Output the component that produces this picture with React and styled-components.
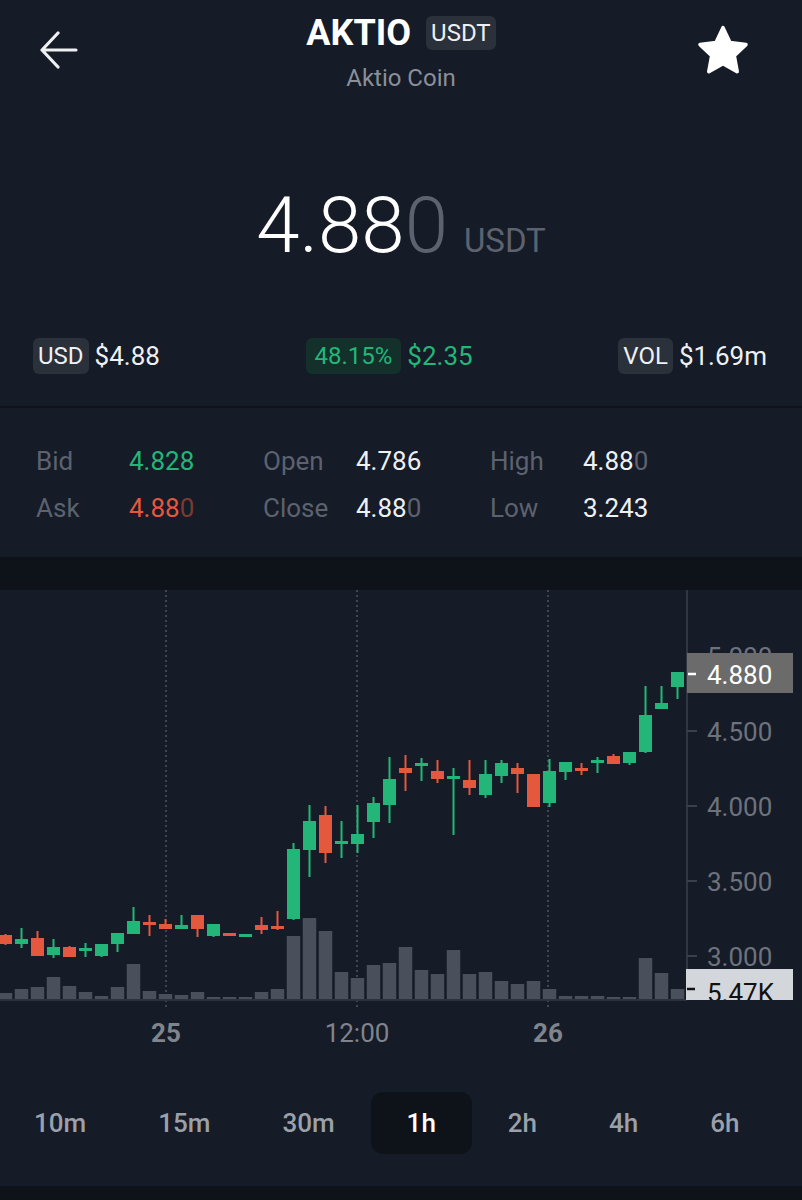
import React from "react";
import styled, { createGlobalStyle, css } from "styled-components";

const C = {
  bg: "#151b27",
  deep: "#0e1319",
  white: "#eef0f2",
  grey: "#5c626e",
  sub: "#8a8f98",
  green: "#22b779",
  red: "#e4583e",
  dimRed: "#7d3a30",
  badge: "#2b313b",
  greenBadge: "#13302b",
  vol: "#4a505b",
  axisText: "#6d727c",
};

const Global = createGlobalStyle`
  html, body { margin: 0; padding: 0; background: ${C.bg}; }
  body { font-family: Roboto, "Liberation Sans", sans-serif; color: ${C.white}; }
  * { box-sizing: border-box; }
`;

const Page = styled.div`
  width: 802px;
  background: ${C.bg};
`;

const Header = styled.header`
  display: grid;
  grid-template-columns: 1fr auto 1fr;
  align-items: center;
  height: 100px;
  padding: 0 40px;
`;

const IconButton = styled.button`
  background: none;
  border: 0;
  padding: 0 ${(p) => (p.$end ? 12 : 0)}px 0 0;
  display: flex;
  color: ${C.white};
  justify-self: ${(p) => (p.$end ? "end" : "start")};
`;

const TitleCol = styled.div`
  align-self: start;
  padding-top: 15px;
  display: flex;
  flex-direction: column;
  align-items: center;
`;

const TitleRow = styled.div`
  display: flex;
  align-items: center;
  gap: 15px;
  height: 36px;
`;

const Title = styled.h1`
  margin: 0;
  font-size: 36px;
  font-weight: 700;
  line-height: 36px;
  color: #fff;
`;

const Badge = styled.span`
  display: inline-flex;
  align-items: center;
  height: ${(p) => p.$h || 36}px;
  padding: 0 ${(p) => p.$pad || 5}px;
  border-radius: 6px;
  background: ${(p) => (p.$tone === "up" ? C.greenBadge : C.badge)};
  color: ${(p) => (p.$tone === "up" ? C.green : C.white)};
  font-size: ${(p) => p.$size || 26}px;
`;

const Subtitle = styled.div`
  margin-top: 12px;
  font-size: 24px;
  line-height: 30px;
  color: ${C.sub};
`;

const PriceSection = styled.section`
  display: flex;
  justify-content: center;
  align-items: baseline;
  padding-top: 81px;
  height: 171px;
`;

const BigPrice = styled.span`
  font-size: 78px;
  font-weight: 300;
  line-height: 90px;
  color: #fff;
`;

const Faded = styled.span`
  color: ${(p) => (p.$tone === "down" ? C.dimRed : C.grey)};
`;

const BigUnit = styled.span`
  margin-left: 16px;
  font-size: 33px;
  font-weight: 400;
  color: ${C.grey};
`;

const SummaryRow = styled.section`
  display: flex;
  justify-content: space-between;
  align-items: center;
  margin-top: 67px;
  padding: 0 35px 0 33px;
  height: 36px;
`;

const SummaryItem = styled.div`
  display: flex;
  align-items: center;
  gap: 6px;
  font-size: 26px;
  color: ${(p) => (p.$tone === "up" ? C.green : C.white)};
`;

const Divider = styled.hr`
  margin: 32px 0 0;
  border: 0;
  height: 2px;
  background: ${C.deep};
`;

const Stats = styled.section`
  display: grid;
  grid-template-columns: 93px 134px 93px 134px 93px 1fr;
  grid-auto-rows: 47px;
  align-items: center;
  padding: 29px 0 26px 36px;
  font-size: 26px;
`;

const Label = styled.span`
  color: ${C.grey};
`;

const Value = styled.span`
  color: ${(p) => (p.$tone === "up" ? C.green : p.$tone === "down" ? C.red : C.white)};
`;

const Strip = styled.div`
  height: ${(p) => p.$h}px;
  background: ${C.deep};
`;

const ChartSvg = styled.svg`
  display: block;
  width: 802px;
  height: 470px;
  font-family: Roboto, "Liberation Sans", sans-serif;
`;

const Tabs = styled.nav`
  display: flex;
  padding: 32px 0;
  margin-left: -2px;
`;

const Tab = styled.button`
  height: 62px;
  padding: 0 36px;
  border: 0;
  border-radius: 12px;
  font-family: inherit;
  font-size: 26px;
  font-weight: 500;
  background: transparent;
  color: #9ba0a9;
  ${(p) =>
    p.$active &&
    css`
      background: ${C.deep};
      color: #fff;
    `}
`;

const BackIcon = () => (
  <svg width="38" height="38" viewBox="0 0 38 38" fill="none" stroke="currentColor" strokeWidth="3.2" strokeLinecap="round" strokeLinejoin="round">
    <path d="M36 19H2M18 2L2 19l16 17" />
  </svg>
);

const StarIcon = () => (
  <svg width="54" height="52" viewBox="0 0 24 23" fill="#fff" stroke="#fff" strokeWidth="1.6" strokeLinejoin="round">
    <path d="M12 1.6l3.1 6.6 7.1.9-5.2 4.9 1.3 7.1L12 17.6l-6.3 3.5 1.3-7.1-5.2-4.9 7.1-.9z" />
  </svg>
);

// [bodyTop, bodyBottom, wickTop, wickBottom, up, volumeTop] in page pixels
const CANDLES = [
  [935, 944, 934, 945, 0, 993],
  [939, 944, 928, 948, 1, 989],
  [938, 956, 931, 956, 0, 987],
  [947, 955, 939, 958, 1, 977],
  [947, 957, 946, 957, 0, 986],
  [948, 951, 943, 957, 1, 992],
  [944, 956, 944, 957, 1, 996],
  [933, 944, 933, 952, 1, 987],
  [921, 934, 907, 934, 1, 964],
  [922, 925, 915, 936, 0, 991],
  [924, 929, 919, 929, 0, 994],
  [925, 929, 915, 929, 1, 995],
  [915, 929, 915, 937, 0, 992],
  [924, 936, 924, 937, 1, 997],
  [933, 936, 933, 936, 0, 997],
  [934, 937, 934, 937, 1, 997],
  [925, 930, 917, 934, 0, 992],
  [926, 929, 911, 930, 0, 989],
  [849, 919, 843, 920, 1, 936],
  [821, 850, 805, 877, 1, 918],
  [815, 853, 806, 863, 0, 931],
  [841, 843, 821, 858, 1, 972],
  [834, 844, 805, 853, 1, 978],
  [803, 822, 797, 838, 1, 965],
  [779, 805, 757, 823, 1, 963],
  [768, 773, 755, 791, 0, 947],
  [763, 765, 758, 781, 1, 970],
  [771, 779, 760, 783, 0, 974],
  [776, 779, 768, 835, 1, 950],
  [780, 788, 760, 795, 0, 974],
  [774, 795, 760, 798, 1, 972],
  [763, 776, 760, 783, 1, 981],
  [768, 774, 763, 793, 0, 984],
  [774, 807, 774, 807, 0, 981],
  [771, 803, 759, 807, 1, 989],
  [762, 772, 762, 780, 1, 996],
  [768, 771, 763, 775, 0, 996],
  [760, 763, 757, 773, 1, 996],
  [756, 764, 754, 764, 0, 997],
  [752, 763, 752, 765, 1, 997],
  [715, 752, 686, 753, 1, 958],
  [703, 709, 686, 709, 1, 973],
  [672, 687, 672, 699, 1, 989],
];

const TOP = 590;
const AXIS_X = 687;

const Chart = () => {
  const ticks = [
    [656, "5.000"],
    [731, "4.500"],
    [806, "4.000"],
    [881, "3.500"],
    [956, "3.000"],
  ];
  const grid = [166, 357, 548];
  const y = (v) => v - TOP;
  return (
    <ChartSvg viewBox="0 0 802 470">
      <defs>
        <clipPath id="plot">
          <rect x="0" y="0" width={AXIS_X - 1} height={y(1000)} />
        </clipPath>
        <clipPath id="axis">
          <rect x={AXIS_X - 1} y="0" width="120" height={y(1000)} />
        </clipPath>
      </defs>
      {grid.map((gx) => (
        <line key={gx} x1={gx} x2={gx} y1="0" y2={y(1010)} stroke="#4b515d" strokeWidth="1.6" strokeDasharray="2 3" />
      ))}
      <g clipPath="url(#plot)">
        {CANDLES.map((c, k) => {
          const cx = 5.5 + 16 * k;
          return (
            <rect key={"v" + k} x={cx - 6.75} y={y(c[5])} width="13.5" height={1000 - c[5]} fill={C.vol} />
          );
        })}
        {CANDLES.map((c, k) => {
          const cx = 5.5 + 16 * k;
          const col = c[4] ? C.green : C.red;
          return (
            <g key={"c" + k} fill={col}>
              <rect x={cx - 1} y={y(c[2])} width="2" height={Math.max(c[3] - c[2], 3)} />
              <rect x={cx - 6.5} y={y(c[0])} width="13" height={Math.max(c[1] - c[0], 3)} />
            </g>
          );
        })}
      </g>
      <line x1="0" x2={AXIS_X} y1={y(1000)} y2={y(1000)} stroke="#2c323d" strokeWidth="2" />
      <line x1={AXIS_X} x2={AXIS_X} y1="0" y2={y(1000)} stroke="#3a404c" strokeWidth="1.5" />
      {ticks.map(([ty, t]) => (
        <g key={t}>
          <line x1={AXIS_X} x2={AXIS_X + 10} y1={y(ty)} y2={y(ty)} stroke="#3a404c" strokeWidth="2" />
          <text x="707" y={y(ty) + 9.5} fontSize="26" fill={C.axisText}>{t}</text>
        </g>
      ))}
      <rect x={AXIS_X} y={y(653)} width="106" height="40" fill="#6b6b6b" />
      <line x1={AXIS_X + 1} x2={AXIS_X + 9} y1={y(674)} y2={y(674)} stroke="#fff" strokeWidth="2.5" />
      <text x="707" y={y(674) + 9.5} fontSize="26" fill="#fff">4.880</text>
      <g clipPath="url(#axis)">
        <rect x={AXIS_X - 1} y={y(969)} width="107" height="40" fill="#d3d6da" />
        <line x1={AXIS_X} x2={AXIS_X + 8} y1={y(989)} y2={y(989)} stroke="#111" strokeWidth="2.5" />
        <text x="707" y={y(989) + 13} fontSize="26" fill="#111">5.47K</text>
      </g>
      <text x="166" y={y(1042)} fontSize="26" fontWeight="700" fill="#80848c" textAnchor="middle">25</text>
      <text x="357" y={y(1042)} fontSize="26" fill="#80848c" textAnchor="middle">12:00</text>
      <text x="548" y={y(1042)} fontSize="26" fontWeight="700" fill="#80848c" textAnchor="middle">26</text>
    </ChartSvg>
  );
};

const STATS = [
  ["Bid", "4.828", "", "up"],
  ["Open", "4.786", ""],
  ["High", "4.88", "0"],
  ["Ask", "4.88", "0", "down"],
  ["Close", "4.88", "0"],
  ["Low", "3.243", ""],
];

const FRAMES = ["10m", "15m", "30m", "1h", "2h", "4h", "6h"];

export default function App() {
  return (
    <Page>
      <Global />
      <Header>
        <IconButton aria-label="Back"><BackIcon /></IconButton>
        <TitleCol>
          <TitleRow>
            <Title>AKTIO</Title>
            <Badge $h={34} $size={24} $pad={5}>USDT</Badge>
          </TitleRow>
          <Subtitle>Aktio Coin</Subtitle>
        </TitleCol>
        <IconButton $end aria-label="Favorite"><StarIcon /></IconButton>
      </Header>

      <PriceSection>
        <BigPrice>4.88<Faded>0</Faded></BigPrice>
        <BigUnit>USDT</BigUnit>
      </PriceSection>

      <SummaryRow>
        <SummaryItem>
          <Badge $size={24}>USD</Badge>
          $4.88
        </SummaryItem>
        <SummaryItem $tone="up">
          <Badge $tone="up" $size={24} $pad={9}>48.15%</Badge>
          $2.35
        </SummaryItem>
        <SummaryItem>
          <Badge $size={24}>VOL</Badge>
          $1.69m
        </SummaryItem>
      </SummaryRow>

      <Divider />

      <Stats>
        {STATS.map(([l, v, z, tone]) => (
          <React.Fragment key={l}>
            <Label>{l}</Label>
            <Value $tone={tone}>
              {v}
              {z && <Faded $tone={tone}>{z}</Faded>}
            </Value>
          </React.Fragment>
        ))}
      </Stats>

      <Strip $h={33} />

      <Chart />

      <Tabs>
        {FRAMES.map((f) => (
          <Tab key={f} $active={f === "1h"}>{f}</Tab>
        ))}
      </Tabs>

      <Strip $h={20} />
    </Page>
  );
}
